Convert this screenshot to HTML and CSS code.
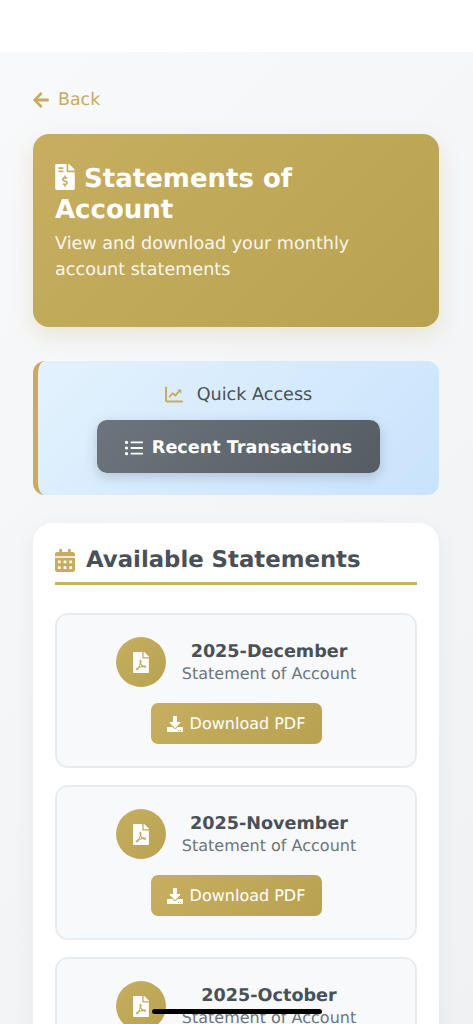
FILE: index.html
```html
<!DOCTYPE html>
<html lang="en">
<head>
<meta charset="utf-8">
<title>Statements of Account</title>
<link rel="stylesheet" href="styles.css">
</head>
<body>
<svg class="defs" aria-hidden="true">
  <symbol id="i-arrow" viewBox="0 0 448 512"><path d="M257.5 445.1l-22.2 22.2c-9.4 9.4-24.6 9.4-33.9 0L7 273c-9.4-9.4-9.4-24.6 0-33.9L201.4 44.7c9.4-9.4 24.6-9.4 33.9 0l22.2 22.2c9.5 9.5 9.3 25-.4 34.3L136.6 216H424c13.3 0 24 10.7 24 24v32c0 13.3-10.7 24-24 24H136.6l120.5 114.8c9.8 9.3 10 24.8.4 34.3z"/></symbol>
  <symbol id="i-invoice" viewBox="0 0 384 512"><path d="M377 105L279.1 7c-4.5-4.5-10.6-7-17-7H256v128h128v-6.1c0-6.3-2.5-12.4-7-16.9zm-153 31V0H24C10.7 0 0 10.7 0 24v464c0 13.3 10.7 24 24 24h336c13.3 0 24-10.7 24-24V160H248c-13.2 0-24-10.8-24-24zM64 72c0-4.42 3.58-8 8-8h80c4.42 0 8 3.58 8 8v16c0 4.42-3.58 8-8 8H72c-4.42 0-8-3.58-8-8V72zm0 80v-16c0-4.42 3.58-8 8-8h80c4.42 0 8 3.58 8 8v16c0 4.42-3.58 8-8 8H72c-4.42 0-8-3.58-8-8zm144 263.88V440c0 4.42-3.58 8-8 8h-16c-4.42 0-8-3.58-8-8v-24.29c-11.29-.58-22.27-4.52-31.37-11.35-3.9-2.93-4.1-8.77-.57-12.14l11.75-11.21c2.77-2.64 6.89-2.76 10.13-.73 3.87 2.42 8.26 3.72 12.82 3.72h28.11c6.5 0 11.8-5.92 11.8-13.19 0-5.95-3.61-11.19-8.77-12.73l-45-13.5c-18.59-5.58-31.58-23.42-31.58-43.39 0-24.52 19.05-44.44 42.67-45.07V232c0-4.42 3.58-8 8-8h16c4.42 0 8 3.58 8 8v24.29c11.29.58 22.27 4.51 31.37 11.35 3.9 2.93 4.1 8.77.57 12.14l-11.75 11.21c-2.77 2.64-6.89 2.76-10.13.73-3.87-2.43-8.26-3.72-12.82-3.72h-28.11c-6.5 0-11.8 5.92-11.8 13.19 0 5.95 3.61 11.19 8.77 12.73l45 13.5c18.59 5.58 31.58 23.42 31.58 43.39 0 24.53-19.05 44.44-42.67 45.07z"/></symbol>
  <symbol id="i-chart" viewBox="0 0 512 512"><path d="M30 40v370c0 20 12 32 32 32h424" fill="none" stroke="currentColor" stroke-width="58" stroke-linecap="round"/><path d="M130 300l86-92 76 62 116-124" fill="none" stroke="currentColor" stroke-width="54" stroke-linecap="round" stroke-linejoin="round"/><path d="M340 96h124v124z"/></symbol>
  <symbol id="i-list" viewBox="0 0 512 512"><circle cx="44" cy="96" r="46"/><circle cx="44" cy="256" r="46"/><circle cx="44" cy="416" r="46"/><rect x="160" y="70" width="352" height="52" rx="12"/><rect x="160" y="230" width="352" height="52" rx="12"/><rect x="160" y="390" width="352" height="52" rx="12"/></symbol>
  <symbol id="i-cal" viewBox="0 0 448 512"><path d="M0 464c0 26.5 21.5 48 48 48h352c26.5 0 48-21.5 48-48V192H0v272zm320-196c0-6.6 5.4-12 12-12h40c6.6 0 12 5.4 12 12v40c0 6.6-5.4 12-12 12h-40c-6.6 0-12-5.4-12-12v-40zm0 128c0-6.6 5.4-12 12-12h40c6.6 0 12 5.4 12 12v40c0 6.6-5.4 12-12 12h-40c-6.6 0-12-5.4-12-12v-40zM192 268c0-6.6 5.4-12 12-12h40c6.6 0 12 5.4 12 12v40c0 6.6-5.4 12-12 12h-40c-6.6 0-12-5.4-12-12v-40zm0 128c0-6.6 5.4-12 12-12h40c6.6 0 12 5.4 12 12v40c0 6.6-5.4 12-12 12h-40c-6.6 0-12-5.4-12-12v-40zM64 268c0-6.6 5.4-12 12-12h40c6.6 0 12 5.4 12 12v40c0 6.6-5.4 12-12 12H76c-6.6 0-12-5.4-12-12v-40zm0 128c0-6.6 5.4-12 12-12h40c6.6 0 12 5.4 12 12v40c0 6.6-5.4 12-12 12H76c-6.6 0-12-5.4-12-12v-40zM400 64h-48V16c0-8.8-7.2-16-16-16h-32c-8.8 0-16 7.2-16 16v48H160V16c0-8.8-7.2-16-16-16h-32c-8.8 0-16 7.2-16 16v48H48C21.5 64 0 85.5 0 112v48h448v-48c0-26.5-21.5-48-48-48z"/></symbol>
  <symbol id="i-pdf" viewBox="0 0 384 512"><path d="M181.9 256.1c-5-16-4.9-46.9-2-46.9 8.4 0 7.6 36.9 2 46.9zm-1.7 47.2c-7.7 20.2-17.3 43.3-28.4 62.7 18.3-7 39-17.2 62.9-21.9-12.7-9.6-24.9-23.4-34.5-40.8zM86.1 428.1c0 .8 13.2-5.4 34.9-40.2-6.7 6.3-29.1 24.5-34.9 40.2zM248 160h136v328c0 13.3-10.7 24-24 24H24c-13.3 0-24-10.7-24-24V24C0 10.7 10.7 0 24 0h200v136c0 13.2 10.8 24 24 24zm-8 171.8c-20-12.2-33.3-29-42.7-53.8 4.5-18.5 11.6-46.6 6.2-64.2-4.7-29.4-42.4-26.5-47.8-6.8-5 18.3-.4 44.1 8.1 77-11.6 27.6-28.7 64.6-40.8 85.8-.1 0-.1.1-.2.1-27.1 13.9-73.6 44.5-54.5 68 5.6 6.9 16 10 21.5 10 17.9 0 35.7-18 61.1-61.8 25.8-8.5 54.1-19.1 79-23.2 21.7 11.8 47.1 19.5 64 19.5 29.2 0 31.2-32 19.7-43.4-13.9-13.6-54.3-9.7-73.6-7.2zM377 105L279 7c-4.5-4.5-10.6-7-17-7h-6v128h128v-6.1c0-6.3-2.5-12.4-7-16.9zm-74.1 255.3c4.1-2.7-2.5-11.9-42.8-9 37.1 15.8 42.8 9 42.8 9z"/></symbol>
  <symbol id="i-down" viewBox="0 0 512 512"><path d="M216 0h80c13.3 0 24 10.7 24 24v168h87.7c17.8 0 26.7 21.5 14.1 34.1L269.7 378.3c-7.5 7.5-19.8 7.5-27.3 0L90.1 226.1c-12.6-12.6-3.7-34.1 14.1-34.1H192V24c0-13.3 10.7-24 24-24zm296 376v112c0 13.3-10.7 24-24 24H24c-13.3 0-24-10.7-24-24V376c0-13.3 10.7-24 24-24h146.7l49 49c20.1 20.1 52.5 20.1 72.6 0l49-49H488c13.3 0 24 10.7 24 24zm-124 88c0-11-9-20-20-20s-20 9-20 20 9 20 20 20 20-9 20-20zm64 0c0-11-9-20-20-20s-20 9-20 20 9 20 20 20 20-9 20-20z"/></symbol>
</svg>
<div class="topbar"></div>
<main class="page">
  <a class="back" href="#"><svg class="ico ico-back"><use href="#i-arrow"/></svg>Back</a>
  <header class="hero">
    <h1 class="hero-title"><svg class="ico ico-invoice"><use href="#i-invoice"/></svg> Statements of Account</h1>
    <p class="hero-sub">View and download your monthly account statements</p>
  </header>
  <section class="quick">
    <div class="quick-title"><svg class="ico ico-chart"><use href="#i-chart"/></svg>Quick Access</div>
    <a class="quick-btn" href="#"><svg class="ico ico-list"><use href="#i-list"/></svg>Recent Transactions</a>
  </section>
  <section class="panel">
    <h2 class="panel-title"><svg class="ico ico-cal"><use href="#i-cal"/></svg>Available Statements</h2>
    <div class="list">
      <article class="item">
        <div class="item-head">
          <span class="badge"><svg class="ico ico-pdf"><use href="#i-pdf"/></svg></span>
          <div class="item-text"><div class="item-name">2025-December</div><div class="item-desc">Statement of Account</div></div>
        </div>
        <a class="dl" href="#"><svg class="ico ico-down"><use href="#i-down"/></svg>Download PDF</a>
      </article>
      <article class="item">
        <div class="item-head">
          <span class="badge"><svg class="ico ico-pdf"><use href="#i-pdf"/></svg></span>
          <div class="item-text"><div class="item-name">2025-November</div><div class="item-desc">Statement of Account</div></div>
        </div>
        <a class="dl" href="#"><svg class="ico ico-down"><use href="#i-down"/></svg>Download PDF</a>
      </article>
      <article class="item">
        <div class="item-head">
          <span class="badge"><svg class="ico ico-pdf"><use href="#i-pdf"/></svg></span>
          <div class="item-text"><div class="item-name">2025-October</div><div class="item-desc">Statement of Account</div></div>
        </div>
        <a class="dl" href="#"><svg class="ico ico-down"><use href="#i-down"/></svg>Download PDF</a>
      </article>
    </div>
  </section>
</main>
<div class="home-bar"></div>
</body>
</html>
```
FILE: styles.css
```css
* { box-sizing: border-box; }
html, body { margin: 0; height: 1024px; overflow: hidden; }
body { background: #fff; font-family: "DejaVu Sans", sans-serif; position: relative; text-rendering: geometricPrecision; }
.defs { display: none; }
.ico { fill: currentColor; display: inline-block; flex: none; }
a { text-decoration: none; }
.topbar { height: 52px; background: #fff; }
.page {
  padding: 37px 34px 40px 33px;
  background: linear-gradient(135deg, #f8f9fa 0%, #e9ecef 100%);
  min-height: 2000px;
}
.back { display: flex; align-items: center; gap: 9px; color: #c9ab5f; font-size: 17.4px; line-height: 22px; margin-bottom: 23px; }
.ico-back { width: 16px; height: 18px; }
.hero {
  background: linear-gradient(135deg, #c7ae60 0%, #b8a252 100%);
  border-radius: 16px;
  padding: 30px 22px 44px;
  color: #fff;
  box-shadow: 0 8px 22px rgba(190,165,90,.22);
  margin-bottom: 34px;
}
.hero-title { margin: 0 0 5px; font-size: 26px; line-height: 31px; font-weight: 700; }
.ico-invoice { width: 20px; height: 26px; vertical-align: -3px; }
.hero-sub { margin: 0; font-size: 17.6px; line-height: 26px; color: rgba(255,255,255,.92); }
.quick {
  background: linear-gradient(135deg, #e3f2fd 0%, #c9e3fc 100%);
  border-left: 5px solid #c9ab5f;
  border-radius: 12px;
  padding: 21px 0 22px;
  display: flex; flex-direction: column; align-items: center;
  margin-bottom: 28px;
}
.quick-title { display: flex; align-items: center; gap: 14px; color: #495057; font-size: 17.6px; line-height: 26px; margin-bottom: 12px; }
.ico-chart { width: 18px; height: 18px; color: #c9ab5f; fill: #c9ab5f; }
.quick-btn {
  width: 283px; height: 53px; padding-top: 2px;
  display: flex; align-items: center; justify-content: center; gap: 9px;
  background: linear-gradient(135deg, #6c757d 0%, #565c63 100%);
  border-radius: 10px;
  color: #fff; font-weight: 700; font-size: 17.6px;
  box-shadow: 0 4px 12px rgba(73,80,87,.25);
}
.ico-list { width: 18px; height: 18px; }
.panel {
  background: #fff;
  border-radius: 20px;
  padding: 21px 22px 20px;
  box-shadow: 0 6px 24px rgba(0,0,0,.05);
}
.panel-title {
  margin: 0 0 28px;
  display: flex; align-items: center; gap: 11px;
  color: #495057; font-size: 22.8px; line-height: 33px; font-weight: 700;
  padding-bottom: 5px;
  border-bottom: 3px solid #cdb063;
}
.ico-cal { width: 20px; height: 23px; color: #c9ab5f; }
.list { display: flex; flex-direction: column; gap: 17px; }
.item {
  height: 155px;
  background: #f8f9fa;
  border: 2px solid #e9ecef;
  border-radius: 13px;
  padding: 22px 0 0;
  display: flex; flex-direction: column; align-items: center;
}
.item-head { display: flex; align-items: center; gap: 16px; margin-bottom: 16px; }
.badge {
  width: 50px; height: 50px; border-radius: 50%;
  background: linear-gradient(135deg, #c7ae60 0%, #b8a252 100%);
  color: #fff; display: flex; align-items: center; justify-content: center;
}
.ico-pdf { width: 16px; height: 21px; }
.item-text { text-align: center; padding-top: 2px; }
.item-name { font-size: 17.6px; line-height: 22px; font-weight: 700; color: #495057; }
.item-desc { font-size: 16px; line-height: 22px; color: #6c757d; }
.dl {
  display: flex; align-items: center; justify-content: center; gap: 7px;
  width: 171px; height: 41px;
  background: linear-gradient(135deg, #c7ae60 0%, #b8a252 100%);
  border-radius: 7px;
  color: #fff; font-size: 16px;
}
.ico-down { width: 16px; height: 16px; }
.home-bar { position: absolute; left: 152px; top: 1009px; width: 170px; height: 5px; border-radius: 3px; background: #000; }
```
